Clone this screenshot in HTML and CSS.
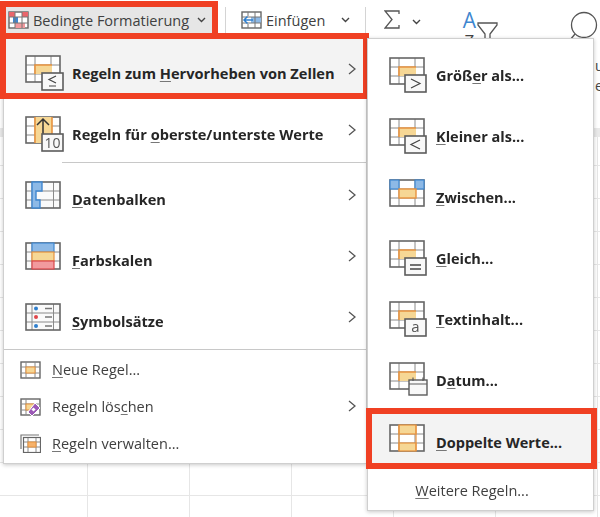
FILE: index.html
```html
<!DOCTYPE html>
<html lang="de">
<head>
<meta charset="utf-8">
<title>Bedingte Formatierung</title>
<link rel="stylesheet" href="styles.css">
</head>
<body>
<svg class="defs" width="0" height="0" aria-hidden="true">
  <defs>
    <symbol id="grid" viewBox="0 0 36 28">
      <rect x="1" y="1" width="34" height="26" fill="#fff"/>
      <path d="M1 10H35M1 19H35M10 1V27M26 1V27" fill="none" stroke="#8a8a8a" stroke-width="1"/>
      <rect x="1" y="1" width="34" height="26" fill="none" stroke="#666" stroke-width="1.6"/>
    </symbol>
    <symbol id="grid2" viewBox="0 0 36 28">
      <rect x="1" y="1" width="34" height="26" fill="#fafafa"/>
      <path d="M1 10H35M1 19H35M7 1V27M28.500 1V27" fill="none" stroke="#8a8a8a" stroke-width="1"/>
      <rect x="1" y="1" width="34" height="26" fill="none" stroke="#666" stroke-width="1.6"/>
    </symbol>
    <symbol id="hl" viewBox="0 0 36 28">
      <use href="#grid" width="36" height="28"/>
      <rect x="10" y="10" width="17" height="9" fill="#f6d795"/>
      <path d="M10 19V10H27" fill="none" stroke="#e8933f" stroke-width="1.6"/>
    </symbol>
    <symbol id="box" viewBox="0 0 23 19">
      <rect x="1" y="1" width="21" height="17" fill="#f8f8f8" stroke="#5c5c5c" stroke-width="1.6"/>
    </symbol>
  </defs>
</svg>

<div class="sheet">
  <div class="ribbon">
    <div class="rb-btn rb-active">
      <svg class="rb-icon" width="21" height="18" viewBox="0 0 21 18">
        <rect x="1" y="1" width="19" height="16" fill="#fff" stroke="#666" stroke-width="1.4"/>
        <rect x="1" y="1" width="6" height="5" fill="#e9666c"/>
        <rect x="14" y="1" width="6" height="5" fill="#e9666c"/>
        <rect x="5" y="6" width="5" height="6" fill="#3f87d0"/>
        <rect x="7" y="12" width="10" height="5" fill="#f29a9e"/>
        <path d="M7 1V17M14 1V17M1 6H20M1 12H20" fill="none" stroke="#777" stroke-width="1"/>
      </svg>
      <span class="rb-text">Bedingte Formatierung</span>
      <svg class="rb-caret" width="9" height="6" viewBox="0 0 9 6"><path d="M1 1L4.500 4.500L8 1" fill="none" stroke="#444" stroke-width="1.400"/></svg>
    </div>
    <div class="rb-sep rb-sep-1"></div>
    <div class="rb-btn rb-insert">
      <svg class="rb-icon" width="21" height="18" viewBox="0 0 21 18">
        <rect x="1" y="1" width="19" height="16" fill="#fff" stroke="#666" stroke-width="1.400"/>
        <rect x="10" y="6" width="10" height="6" fill="#8db9e6"/>
        <path d="M7 1V5M7 13V17M14 1V17M1 6H20M1 12H20" fill="none" stroke="#777" stroke-width="1"/>
        <path d="M12 9H3M6.500 5.500L3 9L6.500 12.500" fill="none" stroke="#2f7fce" stroke-width="1.500"/>
      </svg>
      <span class="rb-text">Einfügen</span>
      <svg class="rb-caret rb-caret-wide" width="9" height="6" viewBox="0 0 9 6"><path d="M1 1L4.500 4.500L8 1" fill="none" stroke="#444" stroke-width="1.400"/></svg>
    </div>
    <div class="rb-sep rb-sep-2"></div>
    <svg class="rb-sum" width="16" height="19" viewBox="0 0 16 19"><path d="M15 4V1H1L8 9.500L1 18H15V15" fill="none" stroke="#555" stroke-width="1.300"/></svg>
    <svg class="rb-caret rb-caret-sum" width="9" height="6" viewBox="0 0 9 6"><path d="M1 1L4.500 4.500L8 1" fill="none" stroke="#444" stroke-width="1.400"/></svg>
    <div class="rb-sort"><span class="rb-a">A</span><span class="rb-z">Z</span></div>
    <svg class="rb-funnel" width="21" height="26" viewBox="0 0 21 26"><path d="M1 1H20V3L13 12V25H8V12L1 3Z" fill="#fff" stroke="#555" stroke-width="1.300"/></svg>
    <svg class="rb-search" width="29" height="30" viewBox="0 0 29 30"><circle cx="15" cy="14" r="12.500" fill="#fff" stroke="#555" stroke-width="1.300"/><path d="M6 23L1 29" stroke="#555" stroke-width="1.300"/></svg>
    <div class="rb-clip"><span>u</span><span>e</span></div>
  </div>
  <div class="col-band"></div>
</div>

<div class="menu menu-main">
  <div class="row row-active">
    <span class="ico"><svg width="36" height="28"><use href="#hl"/></svg><svg class="over" width="23" height="19"><use href="#box"/><path d="M15 4L8 7.500L15 11M8 14H15" fill="none" stroke="#444" stroke-width="1.200"/></svg></span>
    <span class="lbl">Regeln zum <u>H</u>ervorheben von Zellen</span>
    <svg class="arrow" width="8" height="12" viewBox="0 0 8 12"><path d="M1 1L7 6L1 11" fill="none" stroke="#555" stroke-width="1.300"/></svg>
  </div>
  <div class="row">
    <span class="ico"><svg width="36" height="28" viewBox="0 0 36 28"><use href="#grid" width="36" height="28"/><rect x="10" y="1" width="17" height="26" fill="#f6d795"/><path d="M10 1V27M27 1V27" stroke="#e8933f" stroke-width="1.600" fill="none"/><path d="M18 18V4M12 9L18 3L24 9" fill="none" stroke="#333" stroke-width="1.500"/></svg><svg class="over" width="23" height="19"><use href="#box"/><text x="11.500" y="14.500" class="over-t">10</text></svg></span>
    <span class="lbl">Regeln für <u>o</u>berste/unterste Werte</span>
    <svg class="arrow" width="8" height="12" viewBox="0 0 8 12"><path d="M1 1L7 6L1 11" fill="none" stroke="#555" stroke-width="1.300"/></svg>
  </div>
  <div class="sep sep-short"></div>
  <div class="row">
    <span class="ico"><svg width="36" height="28" viewBox="0 0 36 28"><use href="#grid2" width="36" height="28"/><path d="M7 1H17V10H11V19H15V27H7Z" fill="#8db9e6" stroke="#3f87d0" stroke-width="1.400"/></svg></span>
    <span class="lbl"><u>D</u>atenbalken</span>
    <svg class="arrow" width="8" height="12" viewBox="0 0 8 12"><path d="M1 1L7 6L1 11" fill="none" stroke="#555" stroke-width="1.300"/></svg>
  </div>
  <div class="row">
    <span class="ico"><svg width="36" height="28" viewBox="0 0 36 28"><use href="#grid2" width="36" height="28"/><rect x="7" y="1" width="22" height="9" fill="#8db9e6" stroke="#3f87d0" stroke-width="1.200"/><rect x="7" y="10" width="22" height="9" fill="#f6d795" stroke="#e8933f" stroke-width="1.200"/><rect x="7" y="19" width="22" height="8" fill="#f29a9e" stroke="#d9484c" stroke-width="1.200"/></svg></span>
    <span class="lbl"><u>F</u>arbskalen</span>
    <svg class="arrow" width="8" height="12" viewBox="0 0 8 12"><path d="M1 1L7 6L1 11" fill="none" stroke="#555" stroke-width="1.300"/></svg>
  </div>
  <div class="row">
    <span class="ico"><svg width="36" height="28" viewBox="0 0 36 28"><use href="#grid2" width="36" height="28"/><circle cx="11" cy="5.500" r="2" fill="#2f7fce"/><circle cx="11" cy="14" r="2" fill="#e0454a"/><circle cx="11" cy="23" r="2" fill="#2f7fce"/><path d="M20 5.500H27M20 14H27M20 23H27" stroke="#777" stroke-width="1.400"/></svg></span>
    <span class="lbl"><u>S</u>ymbolsätze</span>
    <svg class="arrow" width="8" height="12" viewBox="0 0 8 12"><path d="M1 1L7 6L1 11" fill="none" stroke="#555" stroke-width="1.300"/></svg>
  </div>
  <div class="sep sep-full"></div>
  <div class="mini">
    <svg width="21" height="18" viewBox="0 0 21 18"><rect x="1" y="1" width="19" height="16" fill="#fff" stroke="#666" stroke-width="1.400"/><path d="M6 1V17M15 1V17M1 6H20M1 12H20" stroke="#888" fill="none"/><rect x="6" y="6" width="9" height="6" fill="#f6d795" stroke="#e8933f"/></svg>
    <span class="lbl-sm"><u>N</u>eue Regel...</span>
  </div>
  <div class="mini">
    <svg width="21" height="18" viewBox="0 0 21 18"><rect x="1" y="1" width="19" height="16" fill="#fff" stroke="#666" stroke-width="1.400"/><path d="M6 1V17M1 6H20M1 12H8" stroke="#888" fill="none"/><rect x="6" y="6" width="9" height="6" fill="#f6d795" stroke="#e8933f"/><path d="M15 5L20 10L12 18L8 14Z" fill="#9b59b6" stroke="#fff" stroke-width="1"/><rect x="12" y="10" width="3" height="3" fill="#fff" transform="rotate(45 13.500 11.500)"/></svg>
    <span class="lbl-sm">Regeln lös<u>c</u>hen</span>
    <svg class="arrow" width="8" height="12" viewBox="0 0 8 12"><path d="M1 1L7 6L1 11" fill="none" stroke="#555" stroke-width="1.300"/></svg>
  </div>
  <div class="mini">
    <svg width="21" height="19" viewBox="0 0 21 19"><path d="M1 15V1H19" fill="none" stroke="#777" stroke-width="1.200"/><rect x="3.500" y="3.500" width="17" height="15" fill="#fff" stroke="#666" stroke-width="1.200"/><path d="M8 4V18M16 4V18M4 8H20M4 13H20" stroke="#888" fill="none"/><rect x="8" y="8" width="8" height="5" fill="#f6b26b" stroke="#e8933f"/></svg>
    <span class="lbl-sm"><u>R</u>egeln verwalten...</span>
  </div>
</div>

<div class="menu menu-sub">
  <div class="row-sub">
    <span class="ico"><svg width="36" height="28"><use href="#hl"/></svg><svg class="over" width="23" height="19"><use href="#box"/><path d="M7 5L16 9.500L7 14" fill="none" stroke="#444" stroke-width="1.200"/></svg></span>
    <span class="lbl">Größ<u>e</u>r als...</span>
  </div>
  <div class="row-sub">
    <span class="ico"><svg width="36" height="28"><use href="#hl"/></svg><svg class="over" width="23" height="19"><use href="#box"/><path d="M16 5L7 9.500L16 14" fill="none" stroke="#444" stroke-width="1.200"/></svg></span>
    <span class="lbl"><u>K</u>leiner als...</span>
  </div>
  <div class="row-sub">
    <span class="ico"><svg width="36" height="28" viewBox="0 0 36 28"><use href="#grid" width="36" height="28"/><rect x="1" y="1" width="9" height="9" fill="#8db9e6" stroke="#3f87d0" stroke-width="1.200"/><rect x="26" y="1" width="9" height="9" fill="#8db9e6" stroke="#3f87d0" stroke-width="1.200"/><rect x="10" y="10" width="17" height="9" fill="#f6d795" stroke="#e8933f" stroke-width="1.400"/></svg></span>
    <span class="lbl"><u>Z</u>wischen...</span>
  </div>
  <div class="row-sub">
    <span class="ico"><svg width="36" height="28"><use href="#hl"/></svg><svg class="over" width="23" height="19"><use href="#box"/><path d="M6 8H17M6 12H17" fill="none" stroke="#444" stroke-width="1.300"/></svg></span>
    <span class="lbl"><u>G</u>leich...</span>
  </div>
  <div class="row-sub">
    <span class="ico"><svg width="36" height="28"><use href="#hl"/></svg><svg class="over" width="23" height="19"><use href="#box"/><text x="11.500" y="14" class="over-a">a</text></svg></span>
    <span class="lbl"><u>T</u>extinhalt...</span>
  </div>
  <div class="row-sub">
    <span class="ico"><svg width="36" height="28"><use href="#hl"/></svg><svg class="over over-cal" width="20" height="19" viewBox="0 0 20 19"><rect x="1" y="3" width="18" height="15" fill="#f8f8f8" stroke="#5c5c5c" stroke-width="1.400"/><path d="M1 7H19M5 0.500V4M15 0.500V4" stroke="#5c5c5c" stroke-width="1.200" fill="none"/></svg></span>
    <span class="lbl">D<u>a</u>tum...</span>
  </div>
  <div class="row-sub row-dup">
    <span class="ico"><svg width="36" height="28" viewBox="0 0 36 28"><use href="#grid" width="36" height="28"/><rect x="10" y="1" width="17" height="9" fill="#f6d795" stroke="#e8933f" stroke-width="1.200"/><rect x="10" y="19" width="17" height="8" fill="#f6d795" stroke="#e8933f" stroke-width="1.200"/><path d="M10 1V27M27 1V27" stroke="#e8933f" stroke-width="1.200"/></svg></span>
    <span class="lbl"><u>D</u>oppelte Werte...</span>
  </div>
  <div class="more"><u>W</u>eitere Regeln...</div>
</div>
</body>
</html>
```
FILE: styles.css
```css
* { box-sizing: border-box; }
html, body { margin: 0; padding: 0; }
body {
  width: 600px;
  height: 517px;
  overflow: hidden;
  position: relative;
  background: #fff;
  color: #262626;
  font-family: "Open Sans", "Liberation Sans", sans-serif;
  filter: blur(0.35px);
}
.defs { position: absolute; }

.sheet {
  height: 517px;
  background-image:
    linear-gradient(to right, #e6e6e6 1px, transparent 1px),
    linear-gradient(to bottom, #e6e6e6 1px, transparent 1px);
  background-size: 102px 33px;
  background-position: 87px 0;
}
.ribbon {
  position: relative;
  height: 128px;
  background: #fff;
  display: flex;
  align-items: flex-start;
  padding: 7px 0 0 6px;
  overflow: hidden;
}
.col-band { height: 9px; background: #e9e9e9; }

.rb-btn { display: flex; align-items: center; height: 26px; }
.rb-active {
  width: 206px;
  background: #e6e6e6;
  padding-left: 2px;
  outline: 6px solid #f04023;
}
.rb-insert { margin-left: 15px; }
.rb-text { font-size: 14.500px; color: #404040; margin-left: 4px; white-space: nowrap; }
.rb-caret { margin-left: 8px; flex: none; }
.rb-caret-wide { margin-left: 16px; }
.rb-sep { width: 1px; height: 28px; background: #d4d4d4; flex: none; }
.rb-sep-1 { margin-left: 13px; }
.rb-sep-2 { margin-left: 15px; }
.rb-sum { margin: 3px 0 0 18px; flex: none; }
.rb-caret-sum { margin: 12px 0 0 12px; }
.rb-sort { display: flex; flex-direction: column; align-items: center; width: 14px; margin: 2px 0 0 41px; }
.rb-a { color: #3f87d0; font-size: 21px; line-height: 22px; }
.rb-z { color: #444; font-size: 17px; line-height: 19px; }
.rb-funnel { margin: 15px 0 0 1px; flex: none; }
.rb-search { margin: 4px 0 0 71px; flex: none; }
.rb-clip {
  position: absolute;
  left: 595px;
  top: 56px;
  display: flex;
  flex-direction: column;
  font-size: 14px;
  line-height: 20px;
  color: #444;
}

.menu {
  position: absolute;
  background: #fff;
  border: 1px solid #cfcfcf;
  box-shadow: 0 1px 4px rgba(0, 0, 0, .22);
  display: flex;
  flex-direction: column;
}
.menu-main { left: 3px; top: 38px; width: 364px; height: 426px; }
.menu-sub { left: 367px; top: 38px; width: 227px; height: 473px; padding-top: 8px; }

.row, .row-sub { display: flex; align-items: flex-start; position: relative; flex: none; }
.row { height: 54px; margin: 0 3px 7px 2px; padding: 16px 0 0 19px; }
.row-active { background: #f3f3f3; outline: 6px solid #f04023; }
.ico { position: relative; display: block; width: 36px; height: 28px; flex: none; }
.ico svg { display: block; }
.ico .over { position: absolute; left: 16px; top: 17px; }
.row-sub .ico .over { left: 15px; top: 17px; }
.row-sub .ico .over-cal { left: 19px; top: 15px; }
.over-t { font: 14px "Open Sans", sans-serif; fill: #555; text-anchor: middle; }
.over-a { font: 15px "Open Sans", sans-serif; fill: #555; text-anchor: middle; }

.lbl { font-size: 14.600px; font-weight: 700; line-height: 20px; margin: 8px 0 0 11px; white-space: nowrap; }
.row-sub .lbl { margin: 9px 0 0 11px; font-size: 14.500px; }
.lbl u, .lbl-sm u, .more u { text-decoration-color: #777; text-underline-offset: 2px; }
.arrow { position: absolute; right: 7px; top: 24px; }

.sep { height: 1px; background: #c8c8c8; flex: none; }
.sep-short { margin: 1px 0 2px 58px; }
.sep-full { margin: 1px 0 1px; }

.mini { display: flex; align-items: center; height: 37px; flex: none; position: relative; padding: 0 0 0 16px; }
.mini svg:first-child { flex: none; }
.lbl-sm { font-size: 14.500px; color: #404040; margin-left: 11px; white-space: nowrap; }
.mini .arrow { top: 12px; right: 10px; }

.row-sub { height: 61px; padding: 10px 0 0 21px; margin: 0; }
.row-dup {
  height: 49px;
  margin: 1px 2px 0 4px;
  padding: 10px 0 0 17px;
  background: #f3f3f3;
  outline: 6px solid #f04023;
}
.more { font-size: 14.500px; color: #404040; text-align: center; margin: 18px 0 0 -17px; }
```
